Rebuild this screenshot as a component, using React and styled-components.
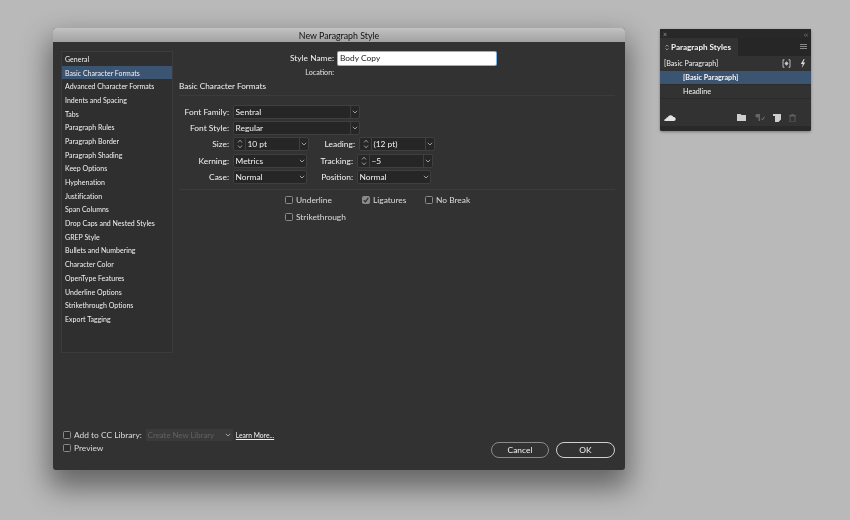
import React from "react";
import styled, { createGlobalStyle } from "styled-components";

const Global = createGlobalStyle`
  html, body { margin: 0; padding: 0; background: #b9b9b9; }
  * { box-sizing: border-box; }
  body { font-family: "Lato", "Open Sans", sans-serif; color: #eee; }
`;

const Desktop = styled.div`
  position: relative;
  width: 850px;
  height: 520px;
  overflow: hidden;
  background: #b9b9b9;
  filter: blur(0.3px);
`;

const Dialog = styled.section`
  position: absolute;
  left: 53px;
  top: 28px;
  width: 572px;
  height: 442px;
  display: flex;
  flex-direction: column;
  background: #323232;
  border-radius: 3px;
  box-shadow: 0 14px 28px 4px rgba(0, 0, 0, 0.45);
`;

const TitleBar = styled.header`
  height: 14px;
  flex: none;
  display: flex;
  align-items: center;
  justify-content: center;
  background: linear-gradient(#c2c2c2, #a2a2a2);
  border-radius: 3px 3px 0 0;
  color: #111;
  font-size: 8.8px;
`;

const Body = styled.div`
  flex: 1;
  min-height: 0;
  position: relative;
  display: flex;
  padding: 9px 10px 12px 8px;
  gap: 6px;
`;

const Sidebar = styled.nav`
  width: 112px;
  height: 302px;
  flex: none;
  border: 1px solid #3c3c3c;
  background: #2f2f2f;
`;

const SideItem = styled.div`
  height: 13.7px;
  display: flex;
  align-items: center;
  padding-left: 3px;
  font-size: 7px;
  letter-spacing: 0.02px;
  color: #f2f2f2;
  background: ${(p) => (p.$active ? "#3a5472" : "transparent")};
`;

const Main = styled.div`
  flex: 1;
  display: flex;
  flex-direction: column;
`;

const NameRow = styled.div`
  display: flex;
  align-items: center;
  height: 14px;
  padding-left: 159px;
`;

const NameLabel = styled.label`
  width: 155px;
  margin-left: -159px;
  text-align: right;
  font-size: 8.4px;
  color: #f2f2f2;
`;

const NameInput = styled.div`
  width: 158px;
  height: 13px;
  margin-left: 4px;
  padding-left: 2px;
  display: flex;
  align-items: center;
  background: #fff;
  border-radius: 1px;
  box-shadow: 0 0 0 1px #7fb4ea;
  color: #222;
  font-size: 8.4px;
`;

const LocationRow = styled.div`
  margin-top: 2px;
  width: 155px;
  height: 11px;
  line-height: 11px;
  text-align: right;
  font-size: 7.2px;
  color: #e4e4e4;
`;

const Heading = styled.h2`
  margin: 3px 0 0;
  height: 11px;
  line-height: 11px;
  font-size: 8.2px;
  font-weight: 400;
  color: #f2f2f2;
`;

const Divider = styled.hr`
  margin: ${(p) => p.$m || "3px 0 0"};
  border: 0;
  height: 1px;
  background: #3b3b3b;
`;

const Form = styled.div`
  margin-top: 8px;
  display: flex;
  flex-direction: column;
`;

const FormRow = styled.div`
  height: 16.2px;
  display: flex;
  align-items: center;
`;

const FieldLabel = styled.span`
  width: ${(p) => p.$w}px;
  flex: none;
  text-align: right;
  padding-right: 4px;
  font-size: 8.4px;
  color: #f2f2f2;
`;

const Control = styled.div`
  width: ${(p) => p.$w}px;
  height: 14px;
  flex: none;
  display: flex;
  align-items: center;
  background: #262626;
  border: 1px solid #3f3f3f;
  border-radius: 2px;
  font-size: 8.4px;
  color: #f2f2f2;
`;

const Value = styled.span`
  flex: 1;
  padding-left: 1.5px;
  white-space: nowrap;
`;

const Stepper = styled.span`
  width: 12px;
  height: 100%;
  flex: none;
  display: flex;
  align-items: center;
  justify-content: center;
  border-right: 1px solid #3f3f3f;
`;

const CaretBox = styled.span`
  width: 9px;
  height: 100%;
  flex: none;
  display: flex;
  align-items: center;
  justify-content: center;
  border-left: ${(p) => (p.$split ? "1px solid #3f3f3f" : "0")};
`;

const Checks = styled.div`
  margin-top: 2px;
  display: grid;
  grid-template-columns: 77px 63px auto;
  grid-auto-rows: 16.5px;
  padding-left: 106px;
  align-items: center;
`;

const CheckWrap = styled.label`
  display: flex;
  align-items: center;
  gap: 3px;
  font-size: 8.4px;
  color: #dcdcdc;
`;

const Box = styled.span`
  width: 8px;
  height: 8px;
  flex: none;
  display: flex;
  align-items: center;
  justify-content: center;
  border: 1px solid #8a8a8a;
  border-radius: 1.5px;
  background: ${(p) => (p.$on ? "#8a8a8a" : "#2c2c2c")};
`;

const Footer = styled.div`
  position: absolute;
  left: 10px;
  right: 10px;
  bottom: 12px;
  display: flex;
  align-items: flex-end;
  justify-content: space-between;
`;

const FooterLeft = styled.div`
  display: flex;
  flex-direction: column;
  margin-bottom: 4px;
`;

const FooterRow = styled.div`
  height: 13px;
  display: flex;
  align-items: center;
`;

const LibrarySelect = styled.div`
  width: 87px;
  height: 12px;
  margin-left: 4px;
  padding: 0 2px;
  display: flex;
  align-items: center;
  justify-content: space-between;
  background: #3a3a3a;
  color: #626262;
  font-size: 7.8px;
`;

const LearnMore = styled.a`
  margin-left: 3px;
  font-size: 6.7px;
  color: #f2f2f2;
  text-decoration: underline;
`;

const Buttons = styled.div`
  display: flex;
  gap: 7px;
`;

const Button = styled.button`
  width: ${(p) => p.$w}px;
  height: 16px;
  padding: 0;
  font-family: inherit;
  font-size: 8.4px;
  color: #f2f2f2;
  background: #323232;
  border: ${(p) => (p.$primary ? "1.5px solid #cfcfcf" : "1px solid #8a8a8a")};
  border-radius: 8px;
`;

const Panel = styled.aside`
  position: absolute;
  left: 660px;
  top: 29px;
  width: 151px;
  height: 102px;
  display: flex;
  flex-direction: column;
  background: #323232;
  border-radius: 2px;
  box-shadow: 0 1px 3px rgba(0, 0, 0, 0.35);
`;

const PanelTop = styled.div`
  height: 9px;
  flex: none;
  padding: 0 3px;
  display: flex;
  align-items: center;
  justify-content: space-between;
  background: #282828;
  color: #999;
  font-size: 7px;
`;

const TabBar = styled.div`
  height: 18px;
  flex: none;
  display: flex;
  align-items: center;
  justify-content: space-between;
  padding-right: 4px;
  background: #262626;
`;

const Tab = styled.div`
  width: 78px;
  height: 100%;
  padding-left: 5px;
  display: flex;
  align-items: center;
  gap: 2px;
  background: #323232;
  font-size: 8.1px;
  font-weight: 700;
  color: #f5f5f5;
`;

const SourceRow = styled.div`
  height: 15px;
  flex: none;
  padding: 0 5px 0 4px;
  display: flex;
  align-items: center;
  font-size: 7.2px;
  color: #f0f0f0;
`;

const SourceName = styled.span`
  flex: 1;
`;

const SourceIcons = styled.span`
  display: flex;
  align-items: center;
  gap: 9px;
`;

const StyleRow = styled.div`
  height: 14px;
  flex: none;
  padding-left: 23px;
  display: flex;
  align-items: center;
  font-size: 7.2px;
  font-weight: ${(p) => (p.$active ? 700 : 400)};
  color: #f5f5f5;
  background: ${(p) => (p.$active ? "#3a5472" : "transparent")};
  border-bottom: 1px solid #2b2b2b;
`;

const PanelSpacer = styled.div`
  flex: 1;
`;

const PanelFooter = styled.div`
  height: 17px;
  flex: none;
  padding: 0 15px 0 4px;
  display: flex;
  align-items: center;
  justify-content: space-between;
`;

const FooterIcons = styled.div`
  display: flex;
  align-items: center;
  gap: 8px;
`;

const PanelGrip = styled.div`
  height: 5px;
  flex: none;
  background: #292929;
  border-radius: 0 0 2px 2px;
`;

const Caret = () => (
  <svg width="6" height="4" viewBox="0 0 6 4">
    <path d="M.8.8 3 3l2.200-2.200" fill="none" stroke="#aaa" strokeWidth=".9" />
  </svg>
);

const Updown = () => (
  <svg width="6" height="10" viewBox="0 0 6 10">
    <path d="M1 3.500 3 1.200l2 2.300M1 6.500l2 2.300 2-2.300" fill="none" stroke="#b5b5b5" strokeWidth=".8" />
  </svg>
);

const Select = ({ w, children, split }) => (
  <Control $w={w}>
    <Value>{children}</Value>
    <CaretBox $split={split}>
      <Caret />
    </CaretBox>
  </Control>
);

const Combo = ({ w, children }) => (
  <Control $w={w}>
    <Stepper>
      <Updown />
    </Stepper>
    <Value>{children}</Value>
    <CaretBox $split>
      <Caret />
    </CaretBox>
  </Control>
);

const Check = ({ on, children }) => (
  <CheckWrap>
    <Box $on={on}>
      {on && (
        <svg width="6" height="6" viewBox="0 0 5 5">
          <path d="M.6 2.600 2 4 4.400.8" fill="none" stroke="#2c2c2c" strokeWidth="1" />
        </svg>
      )}
    </Box>
    {children}
  </CheckWrap>
);

const items = [
  "General", "Basic Character Formats", "Advanced Character Formats", "Indents and Spacing", "Tabs",
  "Paragraph Rules", "Paragraph Border", "Paragraph Shading", "Keep Options", "Hyphenation",
  "Justification", "Span Columns", "Drop Caps and Nested Styles", "GREP Style", "Bullets and Numbering",
  "Character Color", "OpenType Features", "Underline Options", "Strikethrough Options", "Export Tagging",
];

export default function App() {
  return (
    <Desktop>
      <Global />
      <Dialog>
        <TitleBar>New Paragraph Style</TitleBar>
        <Body>
          <Sidebar>
            {items.map((t, i) => (
              <SideItem key={t} $active={i === 1}>{t}</SideItem>
            ))}
          </Sidebar>
          <Main>
            <NameRow>
              <NameLabel>Style Name:</NameLabel>
              <NameInput>Body Copy</NameInput>
            </NameRow>
            <LocationRow>Location:</LocationRow>
            <Heading>Basic Character Formats</Heading>
            <Divider />
            <Form>
              <FormRow>
                <FieldLabel $w={54}>Font Family:</FieldLabel>
                <Select w={127} split>Sentral</Select>
              </FormRow>
              <FormRow>
                <FieldLabel $w={54}>Font Style:</FieldLabel>
                <Select w={127} split>Regular</Select>
              </FormRow>
              <FormRow>
                <FieldLabel $w={54}>Size:</FieldLabel>
                <Combo w={76}>10 pt</Combo>
                <FieldLabel $w={50}>Leading:</FieldLabel>
                <Combo w={76}>(12 pt)</Combo>
              </FormRow>
              <FormRow>
                <FieldLabel $w={54}>Kerning:</FieldLabel>
                <Select w={74}>Metrics</Select>
                <FieldLabel $w={50}>Tracking:</FieldLabel>
                <Combo w={76}>−5</Combo>
              </FormRow>
              <FormRow>
                <FieldLabel $w={54}>Case:</FieldLabel>
                <Select w={74}>Normal</Select>
                <FieldLabel $w={50}>Position:</FieldLabel>
                <Select w={74}>Normal</Select>
              </FormRow>
            </Form>
            <Divider $m="4px 0 0" />
            <Checks>
              <Check>Underline</Check>
              <Check on>Ligatures</Check>
              <Check>No Break</Check>
              <Check>Strikethrough</Check>
            </Checks>
          </Main>
          <Footer>
            <FooterLeft>
              <FooterRow>
                <Check>Add to CC Library:</Check>
                <LibrarySelect>
                  Create New Library
                  <Caret />
                </LibrarySelect>
                <LearnMore>Learn More...</LearnMore>
              </FooterRow>
              <FooterRow>
                <Check>Preview</Check>
              </FooterRow>
            </FooterLeft>
            <Buttons>
              <Button $w={58}>Cancel</Button>
              <Button $w={59} $primary>OK</Button>
            </Buttons>
          </Footer>
        </Body>
      </Dialog>

      <Panel>
        <PanelTop>
          <span>×</span>
          <span>‹‹</span>
        </PanelTop>
        <TabBar>
          <Tab>
            <svg width="4" height="7" viewBox="0 0 4 7">
              <path d="M.6 2.600 2 1l1.400 1.600M.6 4.400 2 6l1.400-1.600" fill="none" stroke="#bbb" strokeWidth=".7" />
            </svg>
            Paragraph Styles
          </Tab>
          <svg width="7" height="6" viewBox="0 0 7 6">
            <path d="M0 .5h7M0 2.500h7M0 4.500h7" stroke="#888" strokeWidth="1" />
          </svg>
        </TabBar>
        <SourceRow>
          <SourceName>[Basic Paragraph]</SourceName>
          <SourceIcons>
            <svg width="9" height="9" viewBox="0 0 9 9">
              <path d="M2.500.8H1v7.400h1.500M6.500.8H8v7.400H6.500M4.500 2.500v4M2.700 4.500h3.600M3.200 3.200l2.600 2.600M5.800 3.200 3.200 5.800" fill="none" stroke="#ddd" strokeWidth=".8" />
            </svg>
            <svg width="6" height="9" viewBox="0 0 6 9">
              <path d="M3.800 0 .8 5h2L1.800 9l3.400-5.400h-2L4.600 0z" fill="#ddd" />
            </svg>
          </SourceIcons>
        </SourceRow>
        <StyleRow $active>[Basic Paragraph]</StyleRow>
        <StyleRow>Headline</StyleRow>
        <PanelSpacer />
        <PanelFooter>
          <svg width="12" height="7" viewBox="0 0 12 7">
            <path d="M.5 7A1.500 1.500 0 0 1 2 4.800 1.600 1.600 0 0 1 3.800 3.300 3 3 0 0 1 9.400 3 2 2 0 0 1 10 7z" fill="#e4e4e4" />
          </svg>
          <FooterIcons>
            <svg width="9" height="7" viewBox="0 0 9 7">
              <path d="M0 0h3.500l1 1H9v6H0z" fill="#cfcfcf" />
            </svg>
            <svg width="11" height="7" viewBox="0 0 11 7">
              <path d="M3 0h3v7H4.500V3.500H3A1.750 1.750 0 0 1 3 0z" fill="#666" />
              <path d="m7.500 4.500 1 1.500L10.500 2.500" fill="none" stroke="#777" strokeWidth=".9" />
            </svg>
            <svg width="8" height="8" viewBox="0 0 8 8">
              <path d="M0 0h8v5.500L5.500 8H2V2H0z" fill="#cfcfcf" />
            </svg>
            <svg width="7" height="8" viewBox="0 0 7 8">
              <path d="M0 1.500h7M2.500 1.500V.5h2v1M1 2v6h5V2z" fill="none" stroke="#666" strokeWidth=".8" />
            </svg>
          </FooterIcons>
        </PanelFooter>
        <PanelGrip />
      </Panel>
    </Desktop>
  );
}
